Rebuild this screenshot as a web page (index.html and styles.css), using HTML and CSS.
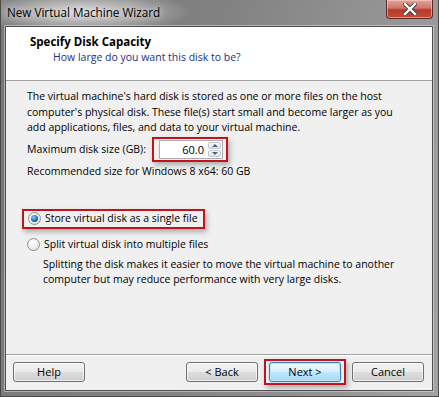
FILE: index.html
```html
<!DOCTYPE html>
<html lang="en">
<head>
    <meta charset="UTF-8">
    <title>New Virtual Machine Wizard</title>
    <link rel="stylesheet" href="styles.css">
</head>
<body>
    <div class="window">
        <div class="titlebar">
            <span class="title">New Virtual Machine Wizard</span>
            <button class="close" aria-label="Close">
                <svg width="14" height="12" viewBox="0 0 14 12">
                    <path d="M2 1 L12 11 M12 1 L2 11" stroke="#3b3b3b" stroke-width="4.2" stroke-linecap="square"/>
                    <path d="M2 1 L12 11 M12 1 L2 11" stroke="#ffffff" stroke-width="2.4" stroke-linecap="square"/>
                </svg>
            </button>
        </div>

        <div class="client">
            <div class="header">
                <h1>Specify Disk Capacity</h1>
                <p class="subtitle">How large do you want this disk to be?</p>
            </div>

            <div class="content">
                <p class="intro">
                    The virtual machine's hard disk is stored as one or more files on the host
                    computer's physical disk. These file(s) start small and become larger as you
                    add applications, files, and data to your virtual machine.
                </p>

                <div class="size-row">
                    <label for="disk-size">Maximum disk size (GB):</label>
                    <div class="highlight spin-wrap">
                        <div class="spinbox">
                            <input id="disk-size" type="text" value="60.0">
                            <div class="spin-buttons">
                                <span class="spin up"></span>
                                <span class="spin down"></span>
                            </div>
                        </div>
                    </div>
                </div>

                <p class="recommended">Recommended size for Windows 8 x64: 60 GB</p>

                <div class="options">
                    <div class="highlight radio-wrap">
                        <label class="radio">
                            <span class="radio-dot checked"></span>
                            Store virtual disk as a single file
                        </label>
                    </div>
                    <label class="radio second">
                        <span class="radio-dot"></span>
                        Split virtual disk into multiple files
                    </label>
                    <p class="note">
                        Splitting the disk makes it easier to move the virtual machine to another
                        computer but may reduce performance with very large disks.
                    </p>
                </div>
            </div>

            <div class="footer">
                <button class="button">Help</button>
                <div class="footer-right">
                    <button class="button">&lt; Back</button>
                    <div class="highlight next-wrap">
                        <button class="button default">Next &gt;</button>
                    </div>
                    <button class="button">Cancel</button>
                </div>
            </div>
        </div>
    </div>
</body>
</html>
```

FILE: styles.css
```css
* {
    margin: 0;
    padding: 0;
    box-sizing: border-box;
}

body {
    width: 439px;
    height: 397px;
    overflow: hidden;
    font-family: "Open Sans", "Noto Sans", sans-serif;
    font-size: 10.5px;
    line-height: 15px;
    color: #000000;
    background: #6e6e6e;
}

.window {
    width: 439px;
    height: 397px;
    display: flex;
    flex-direction: column;
    background:
        radial-gradient(ellipse 110px 22px at 80px 12px, rgba(235, 235, 235, 0.85) 0%, rgba(215, 215, 215, 0.45) 60%, rgba(200, 200, 200, 0) 100%),
        linear-gradient(100deg, #777777 0%, #828282 45%, #a2a2a2 100%);
    border: 1px solid #4a4a4a;
    border-top: none;
}

/* title bar */
.titlebar {
    height: 26px;
    display: flex;
    align-items: flex-start;
    justify-content: space-between;
    padding-left: 6px;
    padding-right: 5px;
}

.title {
    margin-top: 5px;
    font-size: 11.7px;
    color: #000000;
    text-shadow: 0 0 6px rgba(255, 255, 255, 0.9);
}

.close {
    width: 47px;
    height: 19px;
    border: 1px solid #5c2a26;
    border-top: none;
    border-radius: 0 0 4px 4px;
    background: linear-gradient(#e2a49c 0%, #cf7468 45%, #b9392a 55%, #c54a35 100%);
    display: flex;
    align-items: center;
    justify-content: center;
    box-shadow: inset 0 0 0 1px rgba(255, 220, 210, 0.5);
}

/* client area */
.client {
    flex: 1;
    margin: 0 5px 5px 4px;
    background: #f0f0f0;
    border: 1px solid #4f4f4f;
    display: flex;
    flex-direction: column;
    box-shadow: 0 0 0 1px rgba(230, 230, 230, 0.5);
}

.header {
    height: 54px;
    background: #ffffff;
    border-bottom: 1px solid #a0a0a0;
    padding: 7px 0 0 24px;
}

.header h1 {
    font-size: 11.5px;
    font-weight: 700;
}

.subtitle {
    margin: 1px 0 0 23px;
    color: #1b2f88;
}

.content {
    padding: 8px 0 0 21px;
}

.intro {
    line-height: 15.5px;
    width: 370px;
}

.size-row {
    display: flex;
    align-items: center;
    margin-top: 1px;
}

.size-row label {
    width: 125px;
    white-space: nowrap;
}

.highlight {
    border: 2px solid #c4121a;
    box-shadow: 2px 3px 5px rgba(0, 0, 0, 0.28);
}

.spin-wrap {
    padding: 1px 3px 1px 5px;
}

.spinbox {
    display: flex;
    width: 64px;
    height: 19px;
    border: 1px solid #abadb3;
    background: #ffffff;
}

.spinbox input {
    width: 47px;
    border: none;
    outline: none;
    font: inherit;
    font-size: 11px;
    text-align: right;
    padding-right: 3px;
    background: transparent;
}

.spin-buttons {
    flex: 1;
    display: flex;
    flex-direction: column;
    gap: 1px;
    padding: 1px;
}

.spin {
    flex: 1;
    border: 1px solid #c2c7d0;
    border-radius: 2px;
    background: linear-gradient(#f6f7f9, #e3e6ec);
    display: flex;
    align-items: center;
    justify-content: center;
}

.spin::after {
    content: "";
    border-left: 3px solid transparent;
    border-right: 3px solid transparent;
}

.spin.up::after {
    border-bottom: 3px solid #4d6185;
}

.spin.down::after {
    border-top: 3px solid #4d6185;
}

.recommended {
    margin-top: 2px;
}

.options {
    margin-top: 30px;
}

.radio-wrap {
    display: inline-block;
    margin-left: -5px;
    padding: 0 5px 0 4px;
    height: 20px;
}

.radio {
    display: flex;
    align-items: center;
    gap: 4px;
    height: 16px;
}

.radio.second {
    margin-top: 7px;
}

.radio-dot {
    width: 13px;
    height: 13px;
    border-radius: 50%;
    border: 1px solid #8e8f8f;
    background: radial-gradient(circle at 40% 35%, #ffffff 0%, #ececec 60%, #d6d6d6 100%);
    position: relative;
}

.radio-dot.checked::after {
    content: "";
    position: absolute;
    left: 2px;
    top: 2px;
    width: 7px;
    height: 7px;
    border-radius: 50%;
    background: radial-gradient(circle at 40% 35%, #8ad2f5 0%, #1f6fb6 55%, #0d3f7a 100%);
}

.note {
    margin: 5px 0 0 16px;
}

/* footer */
.footer {
    margin-top: auto;
    height: 36px;
    border-top: 1px solid #a0a0a0;
    box-shadow: inset 0 1px 0 #ffffff;
    display: flex;
    align-items: center;
    justify-content: space-between;
    padding: 0 8px 2px 7px;
}

.footer-right {
    display: flex;
    align-items: center;
    gap: 4px;
}

.button {
    width: 72px;
    height: 20px;
    font: inherit;
    font-size: 11px;
    color: #000000;
    border: 1px solid #707070;
    border-radius: 3px;
    background: linear-gradient(#f2f2f2 0%, #ebebeb 48%, #dddddd 52%, #cfcfcf 100%);
    box-shadow: inset 0 0 0 1px rgba(255, 255, 255, 0.7);
}

.next-wrap {
    padding: 1px 3px 1px 3px;
    margin: 0 2px;
}

.button.default {
    border-color: #3c7fb1;
    background: linear-gradient(#eaf6fd 0%, #d9f0fc 48%, #bee6fd 52%, #a7d9f5 100%);
    box-shadow: inset 0 0 0 1px #c4e5f6, 0 0 2px #6fc4f0;
}
```
